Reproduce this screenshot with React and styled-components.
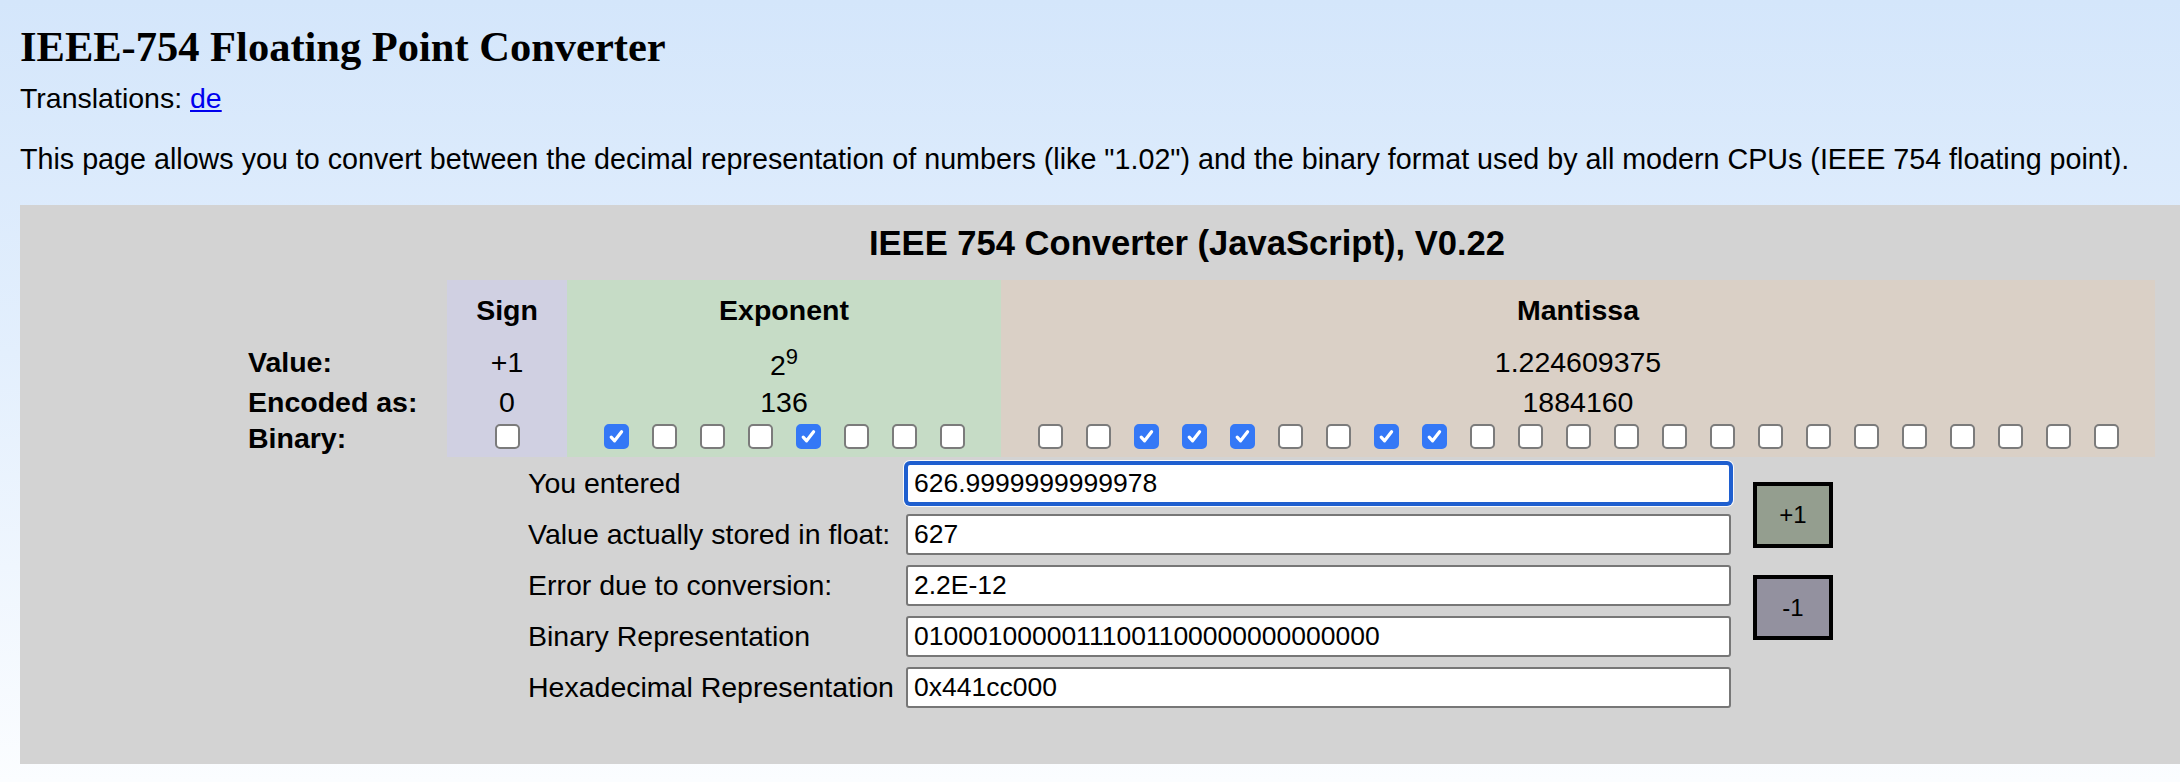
import React from "react";
import styled, { createGlobalStyle } from "styled-components";

const GlobalStyle = createGlobalStyle`
  html, body {
    margin: 0;
    padding: 0;
    overflow: hidden;
  }
  body {
    font-family: "Liberation Sans", Arial, sans-serif;
    font-size: 28.5px;
    color: #000;
  }
`;

const Page = styled("div")`
  min-height: 782px;
  padding-left: 20px;
  background: linear-gradient(180deg, #d4e6fb 0%, #e3effd 45%, #fbfdff 100%);
`;

const Title = styled("h1")`
  margin: 0;
  padding-top: 22px;
  font-family: "Liberation Serif", "Times New Roman", serif;
  font-size: 42.5px;
  line-height: 50px;
  font-weight: bold;
`;

const Translations = styled("div")`
  margin-top: 10px;
  line-height: 33px;

  a {
    color: #0000ee;
    text-decoration: underline;
  }
`;

const Intro = styled("p")`
  margin: 28px 0 0;
  font-size: 28.7px;
  line-height: 33px;
  white-space: nowrap;
`;

const Panel = styled("div")`
  width: 2334px;
  margin-top: 29px;
  padding: 18px 0 56px;
  background: #d3d3d3;
`;

const Heading = styled("h2")`
  margin: 0 0 17px;
  font-size: 34.6px;
  line-height: 40px;
  font-weight: bold;
  text-align: center;
`;

const BitTable = styled("div")`
  display: flex;
  margin-left: 199px;
`;

const Column = styled("div")`
  display: flex;
  flex-direction: column;
  width: ${(p) => p.$w}px;
  background: ${(p) => p.$bg || "transparent"};
`;

const Cell = styled("div")`
  display: flex;
  align-items: ${(p) => (p.$top ? "flex-start" : "center")};
  justify-content: ${(p) => (p.$left ? "flex-start" : "center")};
  height: ${(p) => p.$h}px;
  padding: ${(p) => p.$pad || "0"};
  box-sizing: border-box;
  font-weight: ${(p) => (p.$bold ? "bold" : "normal")};
  line-height: normal;
  white-space: nowrap;
`;

const Sup = styled("span")`
  font-size: 22px;
  vertical-align: 11px;
`;

const BitSlot = styled("div")`
  display: flex;
  justify-content: center;
  width: 48px;
`;

const Box = styled("span")`
  display: flex;
  align-items: center;
  justify-content: center;
  width: 25px;
  height: 25px;
  box-sizing: border-box;
  border-radius: 5px;
  border: 2px solid ${(p) => (p.$on ? "#3478f6" : "#7b7b7b")};
  background: ${(p) => (p.$on ? "#3478f6" : "#ffffff")};
`;

const Lower = styled("div")`
  display: flex;
  align-items: flex-start;
  margin: 6px 0 0 508px;
`;

const Form = styled("div")`
  display: grid;
  grid-template-columns: 378px 825px;
  grid-auto-rows: 41px;
  row-gap: 10px;
`;

const FieldLabel = styled("label")`
  align-self: center;
  line-height: 33px;
  white-space: nowrap;
`;

const Field = styled("input")`
  width: 825px;
  height: 41px;
  box-sizing: border-box;
  margin: 0;
  padding: 0 6px;
  font-family: "Liberation Sans", Arial, sans-serif;
  font-size: 26.5px;
  color: #000;
  background: #fff;
  border: 2px solid ${(p) => (p.$focused ? "#1f5fcf" : "#777777")};
  border-radius: ${(p) => (p.$focused ? "4px" : "3px")};
  box-shadow: ${(p) =>
    p.$focused ? "0 0 0 2px #1f5fcf, 0 0 0 3px rgba(255,255,255,0.85)" : "none"};
  outline: none;
`;

const Buttons = styled("div")`
  display: flex;
  flex-direction: column;
  gap: 27px;
  margin-left: 22px;
  padding-top: 19px;
`;

const StepButton = styled("button")`
  width: 80px;
  height: ${(p) => p.$h}px;
  box-sizing: border-box;
  padding: 0;
  border: 4px solid #000;
  border-radius: 0;
  background: ${(p) => p.$bg};
  font-family: "Liberation Sans", Arial, sans-serif;
  font-size: 24px;
  color: #000;
  cursor: pointer;
`;

const ROWS = [60, 45, 34, 38];

function Bit({ on }) {
  return (
    <BitSlot>
      <Box $on={on} role="checkbox" aria-checked={on}>
        {on && (
          <svg width="17" height="17" viewBox="0 0 17 17">
            <path
              d="M3.2 9.2 L6.6 12.8 L13.6 3.8"
              fill="none"
              stroke="#fff"
              strokeWidth="3.2"
              strokeLinecap="round"
              strokeLinejoin="round"
            />
          </svg>
        )}
      </Box>
    </BitSlot>
  );
}

const fields = [
  ["You entered", "626.9999999999978", true],
  ["Value actually stored in float:", "627"],
  ["Error due to conversion:", "2.2E-12"],
  ["Binary Representation", "01000100000111001100000000000000"],
  ["Hexadecimal Representation", "0x441cc000"],
];

const bits = "01000100000111001100000000000000".split("").map((b) => b === "1");

export default function App() {
  const sign = bits.slice(0, 1);
  const exponent = bits.slice(1, 9);
  const mantissa = bits.slice(9);

  return (
    <Page>
      <GlobalStyle />
      <Title>IEEE-754 Floating Point Converter</Title>
      <Translations>
        Translations: <a href="#de">de</a>
      </Translations>
      <Intro>
        This page allows you to convert between the decimal representation of numbers (like
        "1.02") and the binary format used by all modern CPUs (IEEE 754 floating point).
      </Intro>

      <Panel>
        <Heading>IEEE 754 Converter (JavaScript), V0.22</Heading>

        <BitTable>
          <Column $w={228}>
            <Cell $h={ROWS[0]} />
            <Cell $h={ROWS[1]} $left $bold $pad="0 0 0 29px">Value:</Cell>
            <Cell $h={ROWS[2]} $left $bold $pad="0 0 0 29px">Encoded as:</Cell>
            <Cell $h={ROWS[3]} $left $bold $pad="0 0 0 29px">Binary:</Cell>
          </Column>

          <Column $w={120} $bg="#d0d0e2">
            <Cell $h={ROWS[0]} $bold>Sign</Cell>
            <Cell $h={ROWS[1]}>+1</Cell>
            <Cell $h={ROWS[2]}>0</Cell>
            <Cell $h={ROWS[3]} $top $pad="5px 0 0">
              {sign.map((b, i) => (
                <Bit key={i} on={b} />
              ))}
            </Cell>
          </Column>

          <Column $w={434} $bg="#c6dcc6">
            <Cell $h={ROWS[0]} $bold>Exponent</Cell>
            <Cell $h={ROWS[1]}>
              <span>
                2<Sup>9</Sup>
              </span>
            </Cell>
            <Cell $h={ROWS[2]}>136</Cell>
            <Cell $h={ROWS[3]} $top $pad="5px 0 0">
              {exponent.map((b, i) => (
                <Bit key={i} on={b} />
              ))}
            </Cell>
          </Column>

          <Column $w={1154} $bg="#dad0c6">
            <Cell $h={ROWS[0]} $bold>Mantissa</Cell>
            <Cell $h={ROWS[1]}>1.224609375</Cell>
            <Cell $h={ROWS[2]}>1884160</Cell>
            <Cell $h={ROWS[3]} $top $pad="5px 0 0">
              {mantissa.map((b, i) => (
                <Bit key={i} on={b} />
              ))}
            </Cell>
          </Column>
        </BitTable>

        <Lower>
          <Form>
            {fields.map(([label, value, focused]) => (
              <React.Fragment key={label}>
                <FieldLabel>{label}</FieldLabel>
                <Field type="text" defaultValue={value} $focused={focused} readOnly />
              </React.Fragment>
            ))}
          </Form>
          <Buttons>
            <StepButton $h={66} $bg="#949e8f">+1</StepButton>
            <StepButton $h={65} $bg="#93919f">-1</StepButton>
          </Buttons>
        </Lower>
      </Panel>
    </Page>
  );
}
